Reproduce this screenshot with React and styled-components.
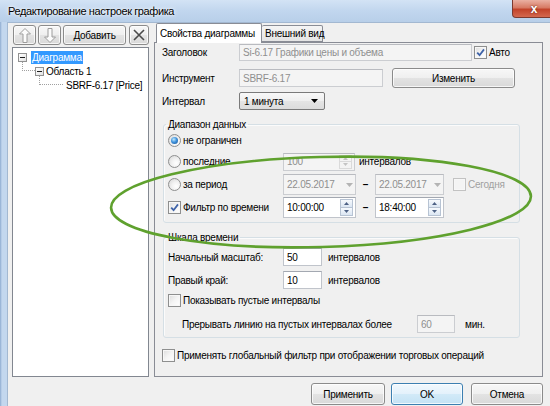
import React from "react";
import styled, { createGlobalStyle } from "styled-components";

const FONT = `"Liberation Sans", Arial, sans-serif`;

const GlobalStyle = createGlobalStyle`
  html, body {
    margin: 0;
    padding: 0;
    background: #c3d7ee;
  }
  body {
    font-family: ${FONT};
    font-size: 10px;
    letter-spacing: -0.25px;
    color: #000;
  }
  * {
    box-sizing: border-box;
  }
`;

const Window = styled.div`
  position: relative;
  width: 550px;
  height: 406px;
  overflow: hidden;
  display: flex;
  flex-direction: column;
  background: linear-gradient(90deg, #8eabd0 0, #c3d7ee 2px, #c6d9ef 100%);
`;

const TitleBar = styled.div`
  flex: none;
  height: 22px;
  display: flex;
  align-items: center;
  justify-content: space-between;
  padding-left: 8px;
  background: linear-gradient(180deg, #d3e3f5 0%, #c1d6ee 50%, #b8cfe9 100%);
`;

const Title = styled.span`
  font-size: 11px;
  letter-spacing: -0.4px;
  text-shadow: 0 0 5px #fff, 0 0 2px #fff;
`;

const CloseButton = styled.div`
  align-self: flex-start;
  width: 44px;
  height: 18px;
  margin-right: -6px;
  display: flex;
  align-items: center;
  justify-content: center;
  border: 1px solid #7c3a2f;
  border-top: none;
  border-radius: 0 0 4px 4px;
  background: linear-gradient(180deg, #eab0a2 0%, #d77a64 45%, #c2432a 55%, #d4694f 100%);
  color: #fff;
  font-weight: bold;
  font-size: 12px;
  letter-spacing: 0;
  text-shadow: 0 0 2px #5a1a0f;
`;

const Client = styled.div`
  flex: 1;
  margin-left: 7px;
  padding-left: 4px;
  display: flex;
  flex-direction: column;
  background: #f0f0f0;
  border-top: 1px solid #a3b8d1;
  border-left: 1px solid #a3b8d1;
`;

const Body = styled.div`
  height: 354px;
  display: flex;
  gap: 5px;
`;

const LeftPane = styled.div`
  width: 137px;
  display: flex;
  flex-direction: column;
  padding-top: 2px;
`;

const Toolbar = styled.div`
  height: 20px;
  margin-bottom: 2px;
  padding-left: 1px;
  display: flex;
  gap: 2px;
`;

const PushButton = styled.div`
  flex: none;
  width: ${(p) => p.$w}px;
  height: ${(p) => p.$h || 22}px;
  margin-left: ${(p) => p.$ml || 0}px;
  display: flex;
  align-items: center;
  justify-content: center;
  border: 1px solid ${(p) => (p.$default ? "#3c7fb1" : "#8b8b8b")};
  border-radius: 3px;
  background: ${(p) =>
    p.$default
      ? "linear-gradient(#f1f8fd 0%, #e3f1fb 50%, #d2eaf8 50%, #c4e2f4 100%)"
      : "linear-gradient(#f7f7f7 0%, #efefef 50%, #e3e3e3 50%, #d9d9d9 100%)"};
  box-shadow: inset 0 0 0 1px rgba(255, 255, 255, 0.75);
  white-space: nowrap;
`;

const Tree = styled.div`
  flex: 1;
  background: #fff;
  border: 1px solid #828790;
  padding-top: 2px;
`;

const TreeRow = styled.div`
  height: 14px;
  display: flex;
  align-items: center;
  padding-left: ${(p) => p.$indent}px;
`;

const Expander = styled.span`
  flex: none;
  width: 9px;
  height: 9px;
  display: flex;
  align-items: center;
  justify-content: center;
  border: 1px solid #919191;
  background: linear-gradient(135deg, #ffffff, #e2e2e2);
  &::after {
    content: "";
    width: 5px;
    height: 1px;
    background: #1e1e1e;
  }
`;

const Elbow = styled.span`
  flex: none;
  align-self: flex-start;
  width: ${(p) => p.$w}px;
  height: 9px;
  margin-top: -2px;
  border-left: 1px dotted #a0a0a0;
  border-bottom: 1px dotted #a0a0a0;
`;

const NodeLabel = styled.span`
  height: 13px;
  line-height: 13px;
  padding: 0 1px;
  margin-left: ${(p) => p.$ml || 0}px;
  white-space: nowrap;
  background: ${(p) => (p.$selected ? "#3399ff" : "transparent")};
  color: ${(p) => (p.$selected ? "#fff" : "#000")};
`;

const RightPane = styled.div`
  width: 389px;
  display: flex;
  flex-direction: column;
`;

const TabStrip = styled.div`
  height: 19px;
  padding-left: 2px;
  display: flex;
  align-items: flex-end;
`;

const Tab = styled.div`
  position: relative;
  z-index: ${(p) => (p.$active ? 1 : 0)};
  width: ${(p) => p.$w}px;
  height: ${(p) => (p.$active ? 20 : 17)}px;
  margin-bottom: ${(p) => (p.$active ? -1 : 0)}px;
  padding-left: 3px;
  display: flex;
  align-items: center;
  border: 1px solid #898c95;
  border-bottom: ${(p) => (p.$active ? "none" : "1px solid #898c95")};
  border-left: ${(p) => (p.$active ? "1px solid #898c95" : "none")};
  border-radius: 2px 2px 0 0;
  background: ${(p) => (p.$active ? "#fff" : "linear-gradient(#f5f5f5, #e4e4e4)")};
  white-space: nowrap;
`;

const TabPage = styled.div`
  flex: 1;
  padding: 1px 0 0 7px;
  border: 1px solid #898c95;
  background: #f0f0f0;
`;

const FormRow = styled.div`
  display: flex;
  align-items: center;
  height: ${(p) => p.$h || 20}px;
  margin-top: ${(p) => p.$mt || 0}px;
  padding-left: ${(p) => p.$indent || 0}px;
`;

const FieldLabel = styled.span`
  flex: none;
  width: ${(p) => p.$w}px;
  white-space: nowrap;
`;

const Caption = styled.span`
  margin-left: ${(p) => p.$ml || 0}px;
  white-space: nowrap;
  color: ${(p) => (p.$disabled ? "#a0a0a0" : "#000")};
`;

const TextBox = styled.div`
  flex: none;
  width: ${(p) => p.$w}px;
  height: ${(p) => p.$h || 18}px;
  margin-left: ${(p) => p.$ml || 0}px;
  display: flex;
  align-items: center;
  justify-content: space-between;
  padding: 0 2px 0 3px;
  border: 1px solid ${(p) => (p.$disabled ? "#cbcdd1" : "#c0c4cb")};
  border-top-color: ${(p) => (p.$disabled ? "#b9bbc0" : "#a3a8b1")};
  background: ${(p) => (p.$disabled ? "#f4f4f4" : "#fff")};
  color: ${(p) => (p.$disabled ? "#8f8f8f" : "#000")};
  white-space: nowrap;
  overflow: hidden;
`;

const Combo = styled.div`
  flex: none;
  width: ${(p) => p.$w}px;
  height: 18px;
  display: flex;
  align-items: center;
  justify-content: space-between;
  padding: 0 6px 0 4px;
  border: 1px solid #7a7a7a;
  border-radius: 2px;
  background: linear-gradient(#f8f8f8 0%, #efefef 50%, #e5e5e5 50%, #dcdcdc 100%);
`;

const Group = styled.fieldset`
  width: 357px;
  margin: ${(p) => p.$mt}px 0 0 1px;
  padding: 0 4px ${(p) => p.$pb}px 4px;
  border: 1px solid #d5dfe5;
  border-radius: 3px;
  box-shadow: inset 1px 1px 0 #fbfbfb;
`;

const Legend = styled.legend`
  padding: 0 2px;
  margin-left: -2px;
  line-height: 13px;
`;

const Option = styled.span`
  flex: none;
  width: ${(p) => (p.$w ? `${p.$w}px` : "auto")};
  display: flex;
  align-items: center;
  gap: 2px;
  white-space: nowrap;
  color: ${(p) => (p.$disabled ? "#a0a0a0" : "#000")};
  margin-left: ${(p) => p.$ml || 0}px;
`;

const RadioMark = styled.span`
  flex: none;
  width: 13px;
  height: 13px;
  display: flex;
  align-items: center;
  justify-content: center;
  border: 1px solid #8e8f8f;
  border-radius: 50%;
  background: radial-gradient(circle at 65% 65%, #ffffff 0, #f2f2f2 40%, #d4d4d4 100%);
  &::after {
    content: "";
    display: ${(p) => (p.$checked ? "block" : "none")};
    width: 7px;
    height: 7px;
    border-radius: 50%;
    background: radial-gradient(circle at 40% 35%, #c2ebfc 0, #3f92dd 45%, #17508f 100%);
  }
`;

const CheckMark = styled.span`
  flex: none;
  width: 13px;
  height: 13px;
  display: flex;
  align-items: center;
  justify-content: center;
  border: 1px solid ${(p) => (p.$disabled ? "#c2c2c2" : "#8e8f8f")};
  background: ${(p) =>
    p.$disabled ? "#f4f4f4" : "linear-gradient(135deg, #dcdcdc 0%, #f4f4f4 50%, #ffffff 100%)"};
  box-shadow: inset 0 0 0 1px #f7f7f7;
`;

const Spin = styled.span`
  flex: none;
  width: 13px;
  height: ${(p) => p.$h}px;
  display: flex;
  flex-direction: column;
`;

const SpinHalf = styled.span`
  flex: 1;
  display: flex;
  align-items: center;
  justify-content: center;
  border: 1px solid ${(p) => (p.$disabled ? "#dadada" : "#b7c3d3")};
  background: ${(p) => (p.$disabled ? "#f4f4f4" : "linear-gradient(#f7fafd, #dbe6f3)")};
  & + & {
    border-top: none;
  }
`;

const Dash = styled.span`
  flex: none;
  width: 19px;
  text-align: center;
  font-weight: bold;
`;

const Footer = styled.div`
  margin-top: 6px;
  padding-right: 7px;
  display: flex;
  justify-content: flex-end;
`;

const Annotation = styled.svg`
  position: absolute;
  left: 0;
  top: 0;
  pointer-events: none;
`;

function Radio({ checked, children, w }) {
  return (
    <Option $w={w}>
      <RadioMark $checked={checked} />
      {children}
    </Option>
  );
}

function Check({ checked, disabled, children, w, ml }) {
  return (
    <Option $w={w} $ml={ml} $disabled={disabled}>
      <CheckMark $disabled={disabled}>
        {checked && (
          <svg width="9" height="9" viewBox="0 0 9 9">
            <path d="M1.2 4.6 L3.6 7.2 L8 1.4" fill="none" stroke="#3f63a8" strokeWidth="1.8" />
          </svg>
        )}
      </CheckMark>
      {children}
    </Option>
  );
}

function SpinButtons({ h, disabled }) {
  const fill = disabled ? "#c4c4c4" : "#4d6185";
  return (
    <Spin $h={h}>
      <SpinHalf $disabled={disabled}>
        <svg width="5" height="3" viewBox="0 0 5 3">
          <path d="M0 3 L2.5 0 L5 3 Z" fill={fill} />
        </svg>
      </SpinHalf>
      <SpinHalf $disabled={disabled}>
        <svg width="5" height="3" viewBox="0 0 5 3">
          <path d="M0 0 L2.5 3 L5 0 Z" fill={fill} />
        </svg>
      </SpinHalf>
    </Spin>
  );
}

function DropArrow({ color }) {
  return (
    <svg width="7" height="4" viewBox="0 0 7 4">
      <path d="M0 0 L7 0 L3.5 4 Z" fill={color} />
    </svg>
  );
}

function ArrowIcon({ down }) {
  return (
    <svg width="12" height="15" viewBox="0 0 12 15" style={down ? { transform: "scaleY(-1)" } : undefined}>
      <path
        d="M6 0.5 L11.5 6 L8 6 L8 14.5 L4 14.5 L4 6 L0.5 6 Z"
        fill="#fbfbfb"
        stroke="#9c9c9c"
        strokeWidth="1"
      />
    </svg>
  );
}

export default function App() {
  return (
    <>
      <GlobalStyle />
      <Window>
        <TitleBar>
          <Title>Редактирование настроек графика</Title>
          <CloseButton>x</CloseButton>
        </TitleBar>

        <Client>
          <Body>
            <LeftPane>
              <Toolbar>
                <PushButton $w={23} $h={20}>
                  <ArrowIcon />
                </PushButton>
                <PushButton $w={23} $h={20}>
                  <ArrowIcon down />
                </PushButton>
                <PushButton $w={63} $h={20}>
                  Добавить
                </PushButton>
                <PushButton $w={20} $h={20} $ml={1}>
                  <svg width="12" height="12" viewBox="0 0 12 12">
                    <path d="M1 1 L11 11 M11 1 L1 11" stroke="#4a4a4a" strokeWidth="1.6" />
                  </svg>
                </PushButton>
              </Toolbar>
              <Tree>
                <TreeRow $indent={5}>
                  <Expander />
                  <NodeLabel $selected $ml={4}>
                    Диаграмма
                  </NodeLabel>
                </TreeRow>
                <TreeRow $indent={9}>
                  <Elbow $w={13} />
                  <Expander />
                  <NodeLabel $ml={1}>Область 1</NodeLabel>
                </TreeRow>
                <TreeRow $indent={26}>
                  <Elbow $w={24} />
                  <NodeLabel $ml={2}>SBRF-6.17 [Price]</NodeLabel>
                </TreeRow>
              </Tree>
            </LeftPane>

            <RightPane>
              <TabStrip>
                <Tab $active $w={106}>
                  Свойства диаграммы
                </Tab>
                <Tab $w={61}>Внешний вид</Tab>
              </TabStrip>
              <TabPage>
                <FormRow $h={17}>
                  <FieldLabel $w={77}>Заголовок</FieldLabel>
                  <TextBox $w={233} $h={17} $disabled>
                    Si-6.17 Графики цены и объема
                  </TextBox>
                  <Check checked ml={2}>
                    Авто
                  </Check>
                </FormRow>
                <FormRow $h={20} $mt={7}>
                  <FieldLabel $w={77}>Инструмент</FieldLabel>
                  <TextBox $w={144} $disabled>
                    SBRF-6.17
                  </TextBox>
                  <PushButton $w={123} $h={20} $ml={9}>
                    Изменить
                  </PushButton>
                </FormRow>
                <FormRow $h={18} $mt={4}>
                  <FieldLabel $w={77}>Интервал</FieldLabel>
                  <Combo $w={86}>
                    1 минута
                    <DropArrow color="#000" />
                  </Combo>
                </FormRow>

                <Group $mt={8} $pb={4}>
                  <Legend>Диапазон данных</Legend>
                  <FormRow $h={18}>
                    <Radio checked w={115}>
                      не ограничен
                    </Radio>
                  </FormRow>
                  <FormRow $h={21} $mt={2}>
                    <Radio w={115}>последние</Radio>
                    <TextBox $w={72} $disabled>
                      100
                      <SpinButtons h={14} disabled />
                    </TextBox>
                    <Caption $ml={4}>интервалов</Caption>
                  </FormRow>
                  <FormRow $h={21} $mt={2}>
                    <Radio w={115}>за период</Radio>
                    <TextBox $w={73} $h={21} $disabled>
                      22.05.2017
                      <DropArrow color="#b4b4b4" />
                    </TextBox>
                    <Dash>–</Dash>
                    <TextBox $w={69} $h={21} $disabled>
                      22.05.2017
                      <DropArrow color="#b4b4b4" />
                    </TextBox>
                    <Check disabled ml={9}>
                      Сегодня
                    </Check>
                  </FormRow>
                  <FormRow $h={21} $mt={2}>
                    <Check checked w={115}>
                      Фильтр по времени
                    </Check>
                    <TextBox $w={73} $h={21}>
                      10:00:00
                      <SpinButtons h={17} />
                    </TextBox>
                    <Dash>–</Dash>
                    <TextBox $w={69} $h={21}>
                      18:40:00
                      <SpinButtons h={17} />
                    </TextBox>
                  </FormRow>
                </Group>

                <Group $mt={8} $pb={3}>
                  <Legend>Шкала времени</Legend>
                  <FormRow $h={20} $mt={3}>
                    <FieldLabel $w={115}>Начальный масштаб:</FieldLabel>
                    <TextBox $w={39}>50</TextBox>
                    <Caption $ml={6}>интервалов</Caption>
                  </FormRow>
                  <FormRow $h={20} $mt={3}>
                    <FieldLabel $w={115}>Правый край:</FieldLabel>
                    <TextBox $w={39}>10</TextBox>
                    <Caption $ml={6}>интервалов</Caption>
                  </FormRow>
                  <FormRow $h={20}>
                    <Check>Показывать пустые интервалы</Check>
                  </FormRow>
                  <FormRow $h={20} $mt={4} $indent={14}>
                    <FieldLabel $w={235}>Прерывать линию на пустых интервалах более</FieldLabel>
                    <TextBox $w={38} $disabled>
                      60
                    </TextBox>
                    <Caption $ml={10}>мин.</Caption>
                  </FormRow>
                </Group>

                <FormRow $h={20} $mt={7}>
                  <Check>Применять глобальный фильтр при отображении торговых операций</Check>
                </FormRow>
              </TabPage>
            </RightPane>
          </Body>

          <Footer>
            <PushButton $w={74}>Применить</PushButton>
            <PushButton $w={72} $ml={6} $default>
              OK
            </PushButton>
            <PushButton $w={72} $ml={8}>
              Отмена
            </PushButton>
          </Footer>
        </Client>

        <Annotation width="550" height="406" viewBox="0 0 550 406">
          <ellipse
            cx="321"
            cy="202"
            rx="210"
            ry="45"
            transform="rotate(-1.6 321 202)"
            fill="none"
            stroke="#5fa12e"
            strokeWidth="2.6"
          />
        </Annotation>
      </Window>
    </>
  );
}
